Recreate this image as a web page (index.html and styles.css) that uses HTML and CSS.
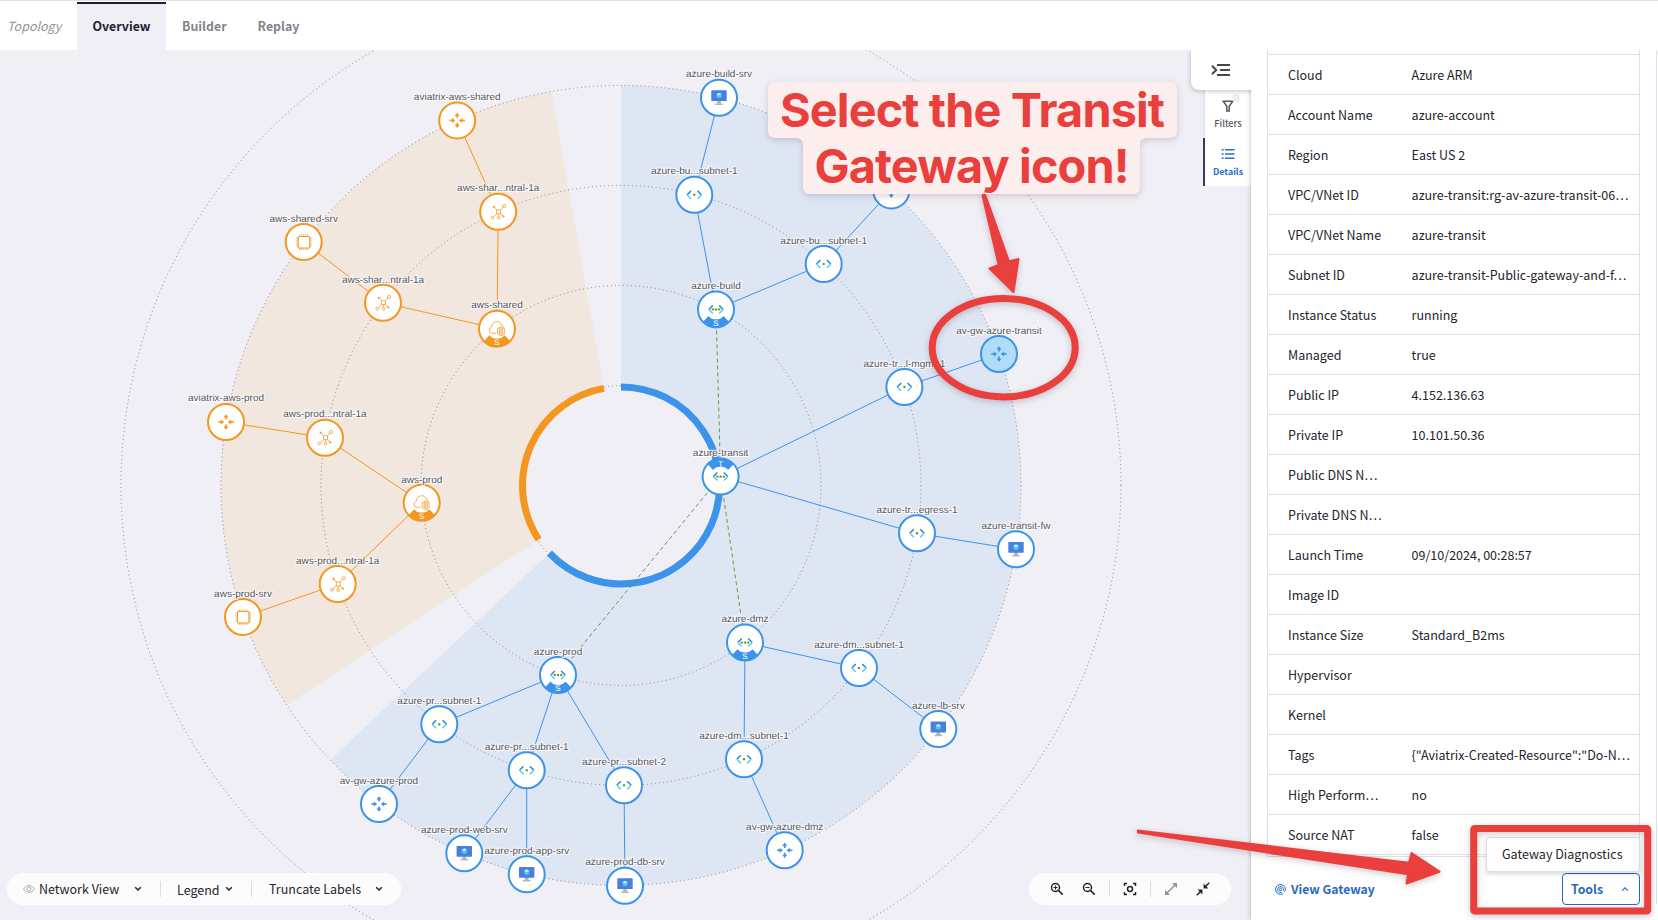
FILE: index.html
```html
<!DOCTYPE html>
<html lang="en">
<head>
<meta charset="utf-8">
<title>Topology</title>
<link rel="stylesheet" href="styles.css">
</head>
<body>
<div class="app">
<header class="tabs">
  <span class="tabs-title">Topology</span>
  <a class="tab tab-active">Overview</a>
  <a class="tab">Builder</a>
  <a class="tab">Replay</a>
</header>
<main class="workspace">
  <section class="canvas">
    <svg class="graph" viewBox="0 50 1251 870" width="1251" height="870">
      <defs>
        <g id="gw">
          <g id="gw-arm"><path d="M-7.7 0H-4" stroke="currentColor" stroke-width="1.6"/><path d="M-5.2-2.5L-1.8 0L-5.2 2.5Z" fill="currentColor"/></g>
          <use href="#gw-arm" transform="rotate(180)"/>
          <path d="M0-2.4V-5M0 2.4V5" stroke="currentColor" stroke-width="1.6"/>
          <path d="M-2.5-4.4L0-7.7L2.5-4.4ZM-2.5 4.4L0 7.7L2.5 4.4Z" fill="currentColor"/>
        </g>
        <g id="vm">
          <path d="M-1.6 3H1.6L2.2 6H-2.2Z" fill="#b5b5b5"/><rect x="-3.8" y="5.8" width="7.6" height="1.4" rx=".5" fill="#b5b5b5"/>
          <rect x="-7.7" y="-7.4" width="15.4" height="10.8" rx=".6" fill="#4a7fe0"/>
          <path d="M0-5L2.6-3.5V-.6L0 .9L-2.6-.6V-3.5Z" fill="#50c5ee"/><path d="M0-5L2.6-3.5L0-2.1L-2.6-3.5Z" fill="#b8edfb"/>
        </g>
        <g id="angles" fill="none" stroke-width="1.4">
          <path d="M-3.2-4L-7.2 0M3.2-4L7.2 0" stroke="#2b7fd8"/><path d="M-7.2 0L-3.2 4M7.2 0L3.2 4" stroke="#52cdf4"/>
        </g>
        <g id="subnet"><use href="#angles"/><circle r="1.2" fill="#63a021"/></g>
        <g id="vnet"><use href="#angles"/><circle r="1.2" fill="#63a021"/><circle cx="-3.2" r="1.2" fill="#63a021"/><circle cx="3.2" r="1.2" fill="#63a021"/></g>
        <g id="chip" fill="none" stroke="#f39b2b">
          <rect x="-5.5" y="-5.5" width="11.5" height="11.5" rx="1" stroke-width="1.1"/>
          <path d="M-4-7.5V-5.5M-2-7.5V-5.5M0-7.5V-5.5M2-7.5V-5.5M4-7.5V-5.5M-4 6V8M-2 6V8M0 6V8M2 6V8M4 6V8M-7.5-4H-5.5M-7.5-2H-5.5M-7.5 0H-5.5M-7.5 2H-5.5M-7.5 4H-5.5M6-4H8M6-2H8M6 0H8M6 2H8M6 4H8" stroke-width=".9" opacity=".85"/>
        </g>
        <g id="hub" fill="none" stroke="#f4a640" stroke-width=".9">
          <rect x="-1.5" y="-2" width="4" height="4"/>
          <path d="M-1.5-2L-4-5M2.5-2L4.8-4.6M-1.5 2L-4.8 5M.5 2V4.6M2.5 2L4.8 4.5"/>
          <circle cx="-4.2" cy="-5" r=".8" fill="#f4a640"/><circle cx="6" cy="-5.8" r="1.6"/><circle cx="-5.8" cy="5.8" r="1.4"/><circle cx=".5" cy="6" r="1.4"/><circle cx="5.2" cy="4.6" r=".8" fill="#f4a640"/>
        </g>
        <g id="vpc" fill="none" stroke="#f4a640" stroke-width=".9">
          <path d="M-1 4.6H-4.7A3 3 0 0 1-5.5-1.3C-5.3-7.8 3.6-9.3 4.6-3.2C6-3.4 6.8-2.3 7-1.3"/>
          <path d="M4-1.7L7.4-.2V5L4 7.2L.6 5V-.2ZM2.5-.5V5.5M4-1.5V7M5.6-.5V5.5" fill="#fff"/>
        </g>
        <path id="badge-shape" d="M-13.2 12.6A18.2 18.2 0 0 0 13.2 12.6L7.5 6.6L4.8 9A14 14 0 0 1-4.8 9L-7.5 6.6Z" fill="currentColor"/>
        <g id="badge-s"><use href="#badge-shape"/><text class="badge" y="16.4">S</text></g>
        <g id="badge-t"><use href="#badge-shape" transform="scale(1 -1)"/><text class="badge" y="-9.9">T</text></g>
      </defs>

      <path class="sector-azure" d="M621 485.4V85.4A400 400 0 1 1 330.1 760Z"/>
      <path class="sector-aws" d="M621 485.4L286.7 705A400 400 0 0 1 551.5 91.4Z"/>
      <circle class="core" cx="621" cy="485.4" r="98"/>
      <g class="rings"><circle cx="621" cy="485.4" r="99.7"/><circle cx="621" cy="485.4" r="200"/><circle cx="621" cy="485.4" r="300"/><circle cx="621" cy="485.4" r="400"/><circle cx="621" cy="485.4" r="500"/></g>
      <path class="arc arc-azure" d="M621 386.9A98.5 98.5 0 1 1 549.4 553"/>
      <path class="arc arc-aws" d="M538.7 539.5A98.5 98.5 0 0 1 603.9 388.4"/>

      <path class="links tunnels" d="M716 309.4L720.6 476.6L745 642.6M720.6 476.6L558 675"/>
      <path class="links aws" d="M457.2 120.4L498.2 211.8L497 328.7L383 302.7L303.7 242M226 422L325 437.7L421.7 502.7L337.7 584L243 617"/>
      <path class="links azure" d="M719 97.7L694.3 194.7L716 309.4L823.7 264L891.3 190.4M999 354L904.4 387L720.6 476.6L917 533.3L1016 549.3M784.7 850.3L744 759.3L745 642.6L859 668L938.3 729M379 804L439.3 724.3L558 675L526.7 770.3L464.3 853.3M526.7 770.3V874.3M558 675L624 785.3L625 885.7"/>

      <g class="node aws" transform="translate(457.2 120.4)"><circle r="18"/><use href="#gw"/><text y="-20.4">aviatrix-aws-shared</text></g>
      <g class="node aws" transform="translate(498.2 211.8)"><circle r="18"/><use href="#hub"/><text y="-20.4">aws-shar...ntral-1a</text></g>
      <g class="node aws" transform="translate(497 328.7)"><circle r="18"/><use href="#vpc"/><use href="#badge-s"/><text y="-20.4">aws-shared</text></g>
      <g class="node aws" transform="translate(383 302.7)"><circle r="18"/><use href="#hub"/><text y="-19.7">aws-shar...ntral-1a</text></g>
      <g class="node aws" transform="translate(303.7 242)"><circle r="18"/><use href="#chip"/><text y="-20">aws-shared-srv</text></g>
      <g class="node aws" transform="translate(226 422)"><circle r="18"/><use href="#gw"/><text y="-20.7">aviatrix-aws-prod</text></g>
      <g class="node aws" transform="translate(325 437.7)"><circle r="18"/><use href="#hub"/><text y="-20.4">aws-prod...ntral-1a</text></g>
      <g class="node aws" transform="translate(421.7 502.7)"><circle r="18"/><use href="#vpc"/><use href="#badge-s"/><text y="-19.5">aws-prod</text></g>
      <g class="node aws" transform="translate(337.7 584)"><circle r="18"/><use href="#hub"/><text y="-19.7">aws-prod...ntral-1a</text></g>
      <g class="node aws" transform="translate(243 617)"><circle r="18"/><use href="#chip"/><text y="-19.7">aws-prod-srv</text></g>

      <g class="node azure" transform="translate(719 97.7)"><circle r="18"/><use href="#vm"/><text y="-20.4">azure-build-srv</text></g>
      <g class="node azure" transform="translate(694.3 194.7)"><circle r="18"/><use href="#subnet"/><text y="-20.4">azure-bu...subnet-1</text></g>
      <g class="node azure" transform="translate(716 309.4)"><circle r="18"/><use href="#vnet"/><use href="#badge-s"/><text y="-20">azure-build</text></g>
      <g class="node azure" transform="translate(823.7 264)"><circle r="18"/><use href="#subnet"/><text y="-19.7">azure-bu...subnet-1</text></g>
      <g class="node azure" transform="translate(891.3 190.4)"><circle r="18"/><use href="#gw"/></g>
      <g class="node azure" transform="translate(904.4 387)"><circle r="18"/><use href="#subnet"/><text y="-19.7">azure-tr...l-mgmt-1</text></g>
      <g class="node azure selected" transform="translate(999 354)"><circle r="18"/><use href="#gw"/><text y="-19.7">av-gw-azure-transit</text></g>
      <g class="node azure" transform="translate(720.6 476.6)"><circle r="18"/><use href="#vnet"/><use href="#badge-t"/><text y="-20.3">azure-transit</text></g>
      <g class="node azure" transform="translate(917 533.3)"><circle r="18"/><use href="#subnet"/><text y="-20">azure-tr...egress-1</text></g>
      <g class="node azure" transform="translate(1016 549.3)"><circle r="18"/><use href="#vm"/><text y="-20">azure-transit-fw</text></g>
      <g class="node azure" transform="translate(745 642.6)"><circle r="18"/><use href="#vnet"/><use href="#badge-s"/><text y="-20.3">azure-dmz</text></g>
      <g class="node azure" transform="translate(859 668)"><circle r="18"/><use href="#subnet"/><text y="-19.7">azure-dm...subnet-1</text></g>
      <g class="node azure" transform="translate(938.3 729)"><circle r="18"/><use href="#vm"/><text y="-19.7">azure-lb-srv</text></g>
      <g class="node azure" transform="translate(744 759.3)"><circle r="18"/><use href="#subnet"/><text y="-20">azure-dm...subnet-1</text></g>
      <g class="node azure" transform="translate(784.7 850.3)"><circle r="18"/><use href="#gw"/><text y="-20">av-gw-azure-dmz</text></g>
      <g class="node azure" transform="translate(558 675)"><circle r="18"/><use href="#vnet"/><use href="#badge-s"/><text y="-19.7">azure-prod</text></g>
      <g class="node azure" transform="translate(439.3 724.3)"><circle r="18"/><use href="#subnet"/><text y="-20">azure-pr...subnet-1</text></g>
      <g class="node azure" transform="translate(526.7 770.3)"><circle r="18"/><use href="#subnet"/><text y="-20">azure-pr...subnet-1</text></g>
      <g class="node azure" transform="translate(624 785.3)"><circle r="18"/><use href="#subnet"/><text y="-20">azure-pr...subnet-2</text></g>
      <g class="node azure" transform="translate(379 804)"><circle r="18"/><use href="#gw"/><text y="-19.7">av-gw-azure-prod</text></g>
      <g class="node azure" transform="translate(464.3 853.3)"><circle r="18"/><use href="#vm"/><text y="-20">azure-prod-web-srv</text></g>
      <g class="node azure" transform="translate(526.7 874.3)"><circle r="18"/><use href="#vm"/><text y="-20">azure-prod-app-srv</text></g>
      <g class="node azure" transform="translate(625 885.7)"><circle r="18"/><use href="#vm"/><text y="-20.4">azure-prod-db-srv</text></g>
    </svg>

    <div class="toolbar view-bar">
      <svg class="eye" width="12" height="10" viewBox="0 0 12 10"><path d="M.6 5C3 .4 9 .4 11.4 5C9 9.6 3 9.6.6 5Z"/><circle cx="6" cy="5" r="2"/></svg>
      <span class="w-network">Network View</span>
      <svg class="chev" width="8" height="6" viewBox="0 0 8 6"><path d="M1.2 1.2L4 4L6.8 1.2"/></svg>
      <i class="sep sep-a"></i>
      <span class="w-legend">Legend</span>
      <svg class="chev" width="8" height="6" viewBox="0 0 8 6"><path d="M1.2 1.2L4 4L6.8 1.2"/></svg>
      <i class="sep sep-b"></i>
      <span class="w-truncate">Truncate Labels</span>
      <svg class="chev" width="8" height="6" viewBox="0 0 8 6"><path d="M1.2 1.2L4 4L6.8 1.2"/></svg>
    </div>

    <div class="toolbar zoom-bar">
      <svg width="14" height="14" viewBox="0 0 14 14"><circle cx="5.5" cy="5.5" r="4"/><path d="M8.5 8.5L12.7 12.7" stroke-width="1.7"/><path d="M3.5 5.5H7.5M5.5 3.5V7.5" stroke-width="1"/></svg>
      <svg width="14" height="14" viewBox="0 0 14 14"><circle cx="5.5" cy="5.5" r="4"/><path d="M8.5 8.5L12.7 12.7" stroke-width="1.7"/><path d="M3.5 5.5H7.5" stroke-width="1"/></svg>
      <i class="sep"></i>
      <svg width="14" height="14" viewBox="0 0 14 14"><path d="M1.5 4V1.5H4M10 1.5H12.5V4M12.5 10V12.5H10M4 12.5H1.5V10"/><circle cx="7" cy="7" r="2.5"/></svg>
      <i class="sep"></i>
      <svg class="dim" width="14" height="14" viewBox="0 0 14 14"><path d="M3 11L11 3"/><path d="M8 1H13V6ZM1 8L6 13H1Z" class="solid"/></svg>
      <svg width="14" height="14" viewBox="0 0 14 14"><path d="M.8 13.2L4.5 9.5M13.2.8L9.5 4.5"/><path d="M7.6 1.6V6.4H12.4ZM1.6 7.6H6.4V12.4Z" class="solid"/></svg>
    </div>

    <button class="collapse"><svg width="20" height="14" viewBox="0 0 20 14"><path d="M1 2.8L5.2 7L1 11.2M6 2H19M9 7H19M6 12H19"/></svg></button>
    <nav class="rail">
      <a class="rail-item"><svg width="12" height="12" viewBox="0 0 12 12"><path d="M1.2 1.2H10.8L7.2 6.2V11H4.8V6.2Z"/></svg>Filters<b class="dot"></b></a>
      <a class="rail-item rail-active"><svg width="14" height="12" viewBox="0 0 14 12"><path d="M4 1.8H13.5M4 6H13.5M4 10.2H13.5M.6 1.8H2.6M.6 6H2.6M.6 10.2H2.6"/></svg>Details</a>
    </nav>
  </section>

  <aside class="details">
    <dl class="props">
      <div><dt>Cloud</dt><dd>Azure ARM</dd></div>
      <div><dt>Account Name</dt><dd>azure-account</dd></div>
      <div><dt>Region</dt><dd>East US 2</dd></div>
      <div><dt>VPC/VNet ID</dt><dd>azure-transit:rg-av-azure-transit-06…</dd></div>
      <div><dt>VPC/VNet Name</dt><dd>azure-transit</dd></div>
      <div><dt>Subnet ID</dt><dd>azure-transit-Public-gateway-and-f…</dd></div>
      <div><dt>Instance Status</dt><dd>running</dd></div>
      <div><dt>Managed</dt><dd>true</dd></div>
      <div><dt>Public IP</dt><dd>4.152.136.63</dd></div>
      <div><dt>Private IP</dt><dd>10.101.50.36</dd></div>
      <div><dt>Public DNS N…</dt><dd></dd></div>
      <div><dt>Private DNS N…</dt><dd></dd></div>
      <div><dt>Launch Time</dt><dd>09/10/2024, 00:28:57</dd></div>
      <div><dt>Image ID</dt><dd></dd></div>
      <div><dt>Instance Size</dt><dd>Standard_B2ms</dd></div>
      <div><dt>Hypervisor</dt><dd></dd></div>
      <div><dt>Kernel</dt><dd></dd></div>
      <div><dt>Tags</dt><dd>{"Aviatrix-Created-Resource":"Do-N…</dd></div>
      <div><dt>High Perform…</dt><dd>no</dd></div>
      <div><dt>Source NAT</dt><dd>false</dd></div>
    </dl>
    <footer class="actions">
      <a class="view-link"><svg width="11" height="11" viewBox="0 0 11 11"><circle cx="5.5" cy="5.5" r="1.2"/><path d="M8.4 5.5A2.9 2.9 0 1 0 7 8M8.4 5.5C8.4 8 10.4 7.6 10.4 5.5A4.9 4.9 0 1 0 7.8 9.8"/></svg>View Gateway</a>
      <button class="tools">Tools<svg width="8" height="6" viewBox="0 0 8 6"><path d="M1.2 4.6L4 1.8L6.8 4.6"/></svg></button>
      <div class="menu">Gateway Diagnostics</div>
    </footer>
  </aside>
</main>
<svg class="notes" viewBox="0 0 1658 920" width="1658" height="920">
  <path class="note-box" d="M775 82H1170Q1177 82 1177 89V131Q1177 138 1170 138H1147Q1140 138 1140 145V187Q1140 194 1133 194H810Q803 194 803 187V145Q803 138 796 138H775Q768 138 768 131V89Q768 82 775 82Z"/>
  <text class="note-text" x="972.5" y="127.3" textLength="385">Select the Transit</text>
  <text class="note-text" x="972" y="183.2" textLength="315">Gateway icon!</text>
  <g class="marks">
    <path class="shape" d="M982.5 195.5Q984 194 985.5 195.5L1009 261.5L1018.5 259L1013.5 292L989.5 268.5L998.7 265Z"/>
    <ellipse cx="1003.7" cy="347.7" rx="71.5" ry="49.2"/>
    <path class="shape" d="M1138 830.5L1409 862.7L1411.5 853L1439.5 871.7L1406.5 883.5L1408 874.3L1138 832.5Z"/>
    <rect x="1473.7" y="828.5" width="174" height="82.5" rx="1"/>
  </g>
</svg>
</div>
</body>
</html>
```
FILE: styles.css
```css
* { box-sizing: border-box; }
body { margin: 0; background: #fff; color: #25242c; font: 12.5px "Noto Sans CJK SC", "Noto Sans", sans-serif; }
button { font: inherit; }
.app { position: relative; width: 1658px; height: 920px; overflow: hidden; }
.tabs { display: flex; height: 50px; padding-top: 2px; box-shadow: inset 0 2px 0 -1px #e0e0e6; font-size: 12.5px; line-height: 48px; }
.tabs-title { width: 77px; padding-left: 7px; font-style: italic; color: #929292; }
.tab { padding: 0 15px 0 16px; font-size: 12.4px; font-weight: 700; color: #84848c; }
.tab-active { width: 89px; padding: 0; text-align: center; background: #f0eff5; border-top: 2px solid #201e34; color: #201e34; line-height: 44px; }
.workspace { display: flex; height: 870px; }
.canvas { position: relative; width: 1251px; background: #f0eff5; overflow: hidden; }
.graph { display: block; }
.aws { color: #f39720; }
.azure { color: #3b94ea; }
.sector-azure { fill: #dee6f4; }
.sector-aws { fill: #f1e7df; }
.core { fill: #f0eff5; }
.rings circle { fill: none; stroke: #80828f; stroke-width: 1; stroke-dasharray: 1 3; }
.arc { fill: none; stroke-width: 7; }
.arc-azure { stroke: #3b94ea; }
.arc-aws { stroke: #f39720; }
.links { fill: none; stroke: currentColor; stroke-width: 1; }
.tunnels { color: #639c3b; stroke-dasharray: 4 3; }
.node > circle { fill: #fff; stroke: currentColor; stroke-width: 2; }
.node.selected > circle { fill: #b0dcf8; }
.node > text { font: 10px "Liberation Sans", Arial, sans-serif; text-anchor: middle; fill: #55555c; stroke: #fff; stroke-width: 2px; stroke-opacity: .85; paint-order: stroke; text-rendering: geometricPrecision; }
.badge { font: 8px "Liberation Sans", Arial, sans-serif; text-anchor: middle; fill: #fff; text-rendering: geometricPrecision; }
.toolbar { position: absolute; bottom: 15px; height: 32px; border-radius: 16px; background: rgba(255,255,255,.8); display: flex; align-items: center; }
.toolbar svg { fill: none; stroke: #24232b; stroke-width: 1.5; flex: none; }
.view-bar { left: 7px; width: 394px; padding-left: 16px; font-size: 12.5px; line-height: 20px; white-space: nowrap; }
.view-bar span { flex: none; padding-bottom: 1px; }
.toolbar .eye { stroke: #b0b0b4; stroke-width: 1; margin-right: 4px; }
.w-network { width: 95px; }
.view-bar .w-legend { width: 48px; padding: 1px 0 0; }
.w-truncate { width: 106px; }
.sep { width: 1px; height: 16px; background: #dcdce2; }
.sep-a { margin: 0 16px 0 18px; }
.sep-b { margin: 0 17px 0 18px; }
.zoom-bar { left: 1029px; width: 202px; padding-left: 21px; }
.zoom-bar > svg:nth-child(1) { margin-right: 18px; }
.zoom-bar > svg:nth-child(2), .zoom-bar > svg:nth-child(4) { margin-right: 13px; }
.zoom-bar .sep { margin-right: 13px; }
.toolbar .dim { stroke: #929296; margin-right: 18px; }
.toolbar .solid { fill: #24232b; stroke: none; }
.toolbar .dim .solid { fill: #929296; }
.collapse { position: absolute; z-index: 1; left: 1191px; top: 0; width: 66px; height: 40px; padding: 0 0 0 20px; border: 0; border-radius: 0 0 0 8px; background: #fff; box-shadow: 0 1px 5px rgba(40,40,70,.3); text-align: left; }
.collapse svg { display: block; fill: none; stroke: #47474d; stroke-width: 2; }
.rail { position: absolute; left: 1203px; top: 38px; width: 48px; background: #fff; }
.rail-item { position: relative; display: flex; flex-direction: column; align-items: center; height: 50px; padding-top: 12px; border-left: 2px solid #e6e5ee; color: #56565c; font-size: 9.2px; font-weight: 500; line-height: 18px; }
.rail-item svg { display: block; fill: none; stroke: currentColor; stroke-width: 1.5; margin-bottom: 2px; flex: none; }
.rail-active { height: 48px; padding-top: 10px; border-color: #41345f; color: #2a6fc9; font-weight: 700; font-size: 8.9px; }
.rail-active svg { margin-bottom: 3px; }
.dot { position: absolute; right: 11px; top: 6px; width: 8px; height: 8px; border-radius: 50%; background: #eeedf4; }
.details { position: relative; width: 407px; padding: 0 18px 0 16px; background: #fff; box-shadow: 0 0 4px rgba(50,50,80,.4); clip-path: inset(0 0 0 -8px); }
.details::after { content: ""; position: absolute; right: 1px; top: 0; width: 1px; height: 854px; background: #e0dfe7; }
.props { margin: 0; padding-top: 4px; border: 1px solid #e0dfe7; border-top: 0; height: 807px; }
.props > div { display: flex; height: 40px; padding-left: 20px; border-top: 1px solid #e0dfe7; line-height: 39px; white-space: nowrap; }
.props > div:last-child { height: 41px; border-bottom: 1px solid #e0dfe7; }
.props dt { flex: none; width: 123.6px; }
.props dd { margin: 0; }
.actions { position: relative; display: flex; justify-content: space-between; height: 63px; padding-top: 16px; align-items: flex-start; }
.view-link { display: flex; align-items: center; height: 32px; padding-left: 8px; color: #2869c0; font-weight: 700; font-size: 12.2px; }
.view-link svg { margin-right: 5px; fill: none; stroke: currentColor; stroke-width: 1; }
.tools { display: flex; align-items: center; justify-content: space-between; width: 78px; height: 32px; padding: 0 10px 0 8px; border: 1px solid #2869c0; border-radius: 4px; background: #fff; color: #2869c0; font-size: 12.3px; font-weight: 700; }
.tools svg { fill: none; stroke: currentColor; stroke-width: 1.2; }
.menu { position: absolute; right: 0; top: -20px; width: 154px; height: 35px; padding-left: 15px; border: 1px solid #dddde3; border-radius: 3px; background: #fff; box-shadow: 0 2px 4px rgba(0,0,0,.15); line-height: 32px; white-space: nowrap; }
.notes { position: absolute; left: 0; top: 0; pointer-events: none; }
.note-box { fill: #fceeed; filter: drop-shadow(0 2px 3px rgba(60,30,60,.2)); }
.note-text { font: 700 46.8px Inter, "Liberation Sans", sans-serif; fill: #e93f3d; text-anchor: middle; }
.marks { fill: none; stroke: #e93f3d; stroke-width: 7; filter: drop-shadow(0 2px 3px rgba(60,30,60,.25)); }
.marks .shape { fill: #e93f3d; stroke-width: 2; stroke-linejoin: round; }
```
